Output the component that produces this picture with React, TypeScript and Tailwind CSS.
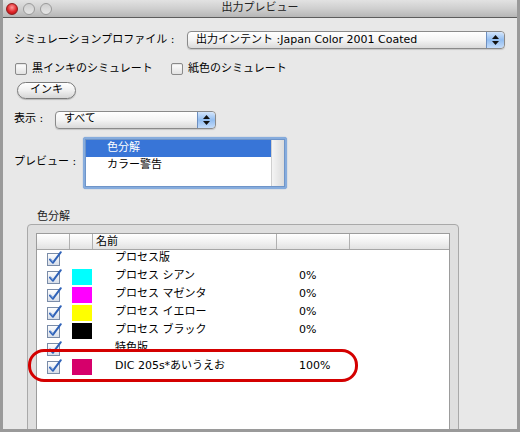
import React from 'react';

const rows = [
  { name: 'プロセス版', color: '', pct: '' },
  { name: 'プロセス シアン', color: 'bg-[#00ffff]', pct: '0%' },
  { name: 'プロセス マゼンタ', color: 'bg-[#ff00ff]', pct: '0%' },
  { name: 'プロセス イエロー', color: 'bg-[#ffff00]', pct: '0%' },
  { name: 'プロセス ブラック', color: 'bg-[#000000]', pct: '0%' },
  { name: '特色版', color: '', pct: '' },
  { name: 'DIC 205s*あいうえお', color: 'bg-[#d6006b]', pct: '100%' },
];

const ArrowCap = () => (
  <div className="flex h-full w-[18px] flex-col items-center justify-center gap-[2px] rounded-r-[4px] border-l border-[#6d8fc0] bg-gradient-to-b from-[#d4e6fc] via-[#92bdf0] to-[#c4dcfa]">
    <svg width="7" height="4" viewBox="0 0 7 4"><path d="M3.5 0L7 4H0z" fill="#111" /></svg>
    <svg width="7" height="4" viewBox="0 0 7 4"><path d="M0 0h7L3.5 4z" fill="#111" /></svg>
  </div>
);

const Checkbox = () => (
  <span className="block h-[12px] w-[12px] rounded-[2px] border border-[#8a8a8a] bg-gradient-to-b from-white to-[#e2e2e2] shadow-[inset_0_1px_1px_rgba(0,0,0,0.1)]" />
);

const CheckIcon = () => (
  <svg width="15" height="15" viewBox="0 0 15 15">
    <defs>
      <linearGradient id="cb" x1="0" y1="0" x2="0" y2="1">
        <stop offset="0" stopColor="#ffffff" />
        <stop offset="1" stopColor="#d6dde8" />
      </linearGradient>
    </defs>
    <rect x="0.5" y="2.5" width="12" height="12" fill="url(#cb)" stroke="#7a8ca8" />
    <path d="M3 8.5l3 3.2L13.8 1.2" fill="none" stroke="#2f62b8" strokeWidth="2" strokeLinecap="round" strokeLinejoin="round" />
    <path d="M3.6 8.3l2.4 2.6" fill="none" stroke="#8fb3ea" strokeWidth="0.8" />
  </svg>
);

export default function App() {
  return (
    <div className="h-[432px] w-[520px] overflow-hidden bg-[#9a9a9a] px-[3px] pb-[3px] font-['DejaVu_Sans','Noto_Sans_CJK_JP',sans-serif] text-[11px] text-black">
      <div className="flex h-full flex-col overflow-hidden bg-[#e8e8e8]">
        {/* Title bar */}
        <div className="relative flex h-[18px] shrink-0 items-center border-b border-[#5c5c5c] bg-gradient-to-b from-[#e2e2e2] via-[#cfcfcf] to-[#b6b6b6]">
          <div className="flex items-center gap-[5px] pl-[3px]">
            <span className="block h-[12px] w-[12px] rounded-full border border-[#8c1c1c] bg-[radial-gradient(circle_at_50%_35%,#ff9a9a,#e0262a_55%,#a80f12)]" />
            <span className="block h-[12px] w-[12px] rounded-full border border-[#9a9a9a] bg-gradient-to-b from-[#cfcfcf] to-[#e6e6e6]" />
            <span className="block h-[12px] w-[12px] rounded-full border border-[#9a9a9a] bg-gradient-to-b from-[#cfcfcf] to-[#e6e6e6]" />
          </div>
          <span className="absolute left-0 right-0 text-center text-[11px] text-[#222]">出力プレビュー</span>
        </div>

        {/* Simulation profile */}
        <div className="mt-[13px] flex items-center pl-[11px]">
          <span className="w-[173px]">シミュレーションプロファイル :</span>
          <div className="flex h-[18px] w-[318px] items-center rounded-[4px] border border-[#8a8a8a] bg-gradient-to-b from-white via-[#f4f4f4] to-[#dadada] shadow-[0_1px_1px_rgba(0,0,0,0.15)]">
            <span className="flex-1 pl-[8px]">出力インテント :Japan Color 2001 Coated</span>
            <ArrowCap />
          </div>
        </div>

        {/* Checkboxes */}
        <div className="mt-[12px] flex items-center pl-[12px]">
          <Checkbox />
          <span className="ml-[5px] w-[139px]">黒インキのシミュレート</span>
          <Checkbox />
          <span className="ml-[5px]">紙色のシミュレート</span>
        </div>

        {/* Ink button */}
        <div className="mt-[4px] pl-[14px]">
          <div className="flex h-[17px] w-[59px] items-center justify-center rounded-full border border-[#7a7a7a] bg-gradient-to-b from-white via-[#f0f0f0] to-[#d6d6d6] shadow-[0_1px_1px_rgba(0,0,0,0.2)]">
            インキ
          </div>
        </div>

        {/* Display */}
        <div className="mt-[12px] flex items-center pl-[11px]">
          <span className="w-[41px]">表示 :</span>
          <div className="flex h-[18px] w-[161px] items-center rounded-[4px] border border-[#8a8a8a] bg-gradient-to-b from-white via-[#f4f4f4] to-[#dadada] shadow-[0_1px_1px_rgba(0,0,0,0.15)]">
            <span className="flex-1 pl-[8px]">すべて</span>
            <ArrowCap />
          </div>
        </div>

        {/* Preview */}
        <div className="mt-[8px] flex items-center pl-[11px]">
          <span className="w-[69px]">プレビュー :</span>
          <div className="h-[52px] w-[204px] rounded-[3px] border-[2px] border-[#86acdd] bg-white shadow-[0_0_1px_#5a86c4]">
            <div className="flex h-full border border-[#6f95c9]">
              <div className="flex-1">
                <div className="flex h-[17px] items-center bg-[#3875d7] pl-[21px] text-white">色分解</div>
                <div className="flex h-[18px] items-center pl-[21px]">カラー警告</div>
              </div>
              <div className="w-[13px] border-l border-[#cfcfcf] bg-gradient-to-r from-[#f4f4f4] to-[#dcdcdc]" />
            </div>
          </div>
        </div>

        {/* Separation group */}
        <div className="mt-[21px] pl-[34px] leading-[14px] text-[#222]">色分解</div>
        <div className="ml-[24px] w-[432px] flex-1 rounded-t-[4px] border border-[#a9a9a9] bg-[#dfdfdf] px-[8px] pt-[8px]">
          <div className="h-[300px] border border-[#9c9c9c] bg-white">
            <div className="flex h-[16px] border-b border-[#a6a6a6] bg-gradient-to-b from-white via-[#f2f2f2] to-[#e2e2e2]">
              <div className="w-[33px] border-r border-[#b0b0b0]" />
              <div className="w-[23px] border-r border-[#b0b0b0]" />
              <div className="w-[184px] border-r border-[#b0b0b0] pl-[3px] leading-[15px]">名前</div>
              <div className="w-[73px] border-r border-[#b0b0b0]" />
              <div className="flex-1" />
            </div>
            <div className="relative">
              {rows.map((r) => (
                <div key={r.name} className="flex h-[18px] items-center">
                  <div className="flex w-[33px] justify-center pl-[2px]">
                    <CheckIcon />
                  </div>
                  <div className="flex w-[23px] justify-center">
                    {r.color && <span className={`block h-[16px] w-[20px] ${r.color}`} />}
                  </div>
                  <div className="w-[206px] pl-[22px]">{r.name}</div>
                  <div>{r.pct}</div>
                </div>
              ))}
              <div className="absolute left-[-9px] top-[99px] h-[33px] w-[330px] rounded-[16px] border-[3px] border-[#d40000]" />
            </div>
          </div>
        </div>
      </div>
    </div>
  );
}
